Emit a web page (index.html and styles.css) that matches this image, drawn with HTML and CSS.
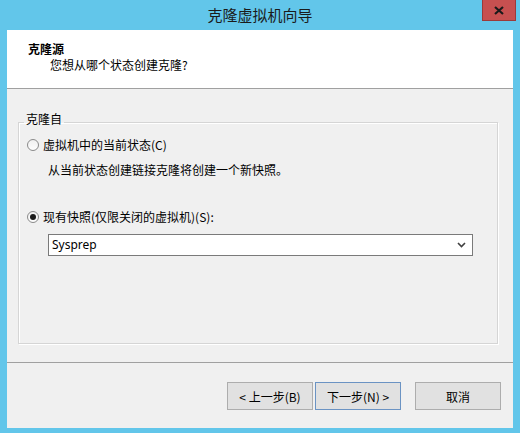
FILE: index.html
```html
<!DOCTYPE html>
<html lang="zh-CN">
<head>
    <meta charset="UTF-8">
    <title>克隆虚拟机向导</title>
    <link rel="stylesheet" href="styles.css">
</head>
<body>
    <div class="window">
        <div class="titlebar">
            <span class="title">克隆虚拟机向导</span>
            <div class="close">
                <svg width="10" height="9" viewBox="0 0 10 9"><path d="M1 1 L9 8 M9 1 L1 8" stroke="#1a1a1a" stroke-width="2.2"/></svg>
            </div>
        </div>
        <div class="client">
            <div class="header">
                <div class="h-title">克隆源</div>
                <div class="h-sub">您想从哪个状态创建克隆?</div>
            </div>
            <div class="main">
                <fieldset class="group">
                    <legend>克隆自</legend>
                    <div class="radio first"><span class="dot"></span>虚拟机中的当前状态(C)</div>
                    <div class="desc">从当前状态创建链接克隆将创建一个新快照。</div>
                    <div class="radio second"><span class="dot checked"></span>现有快照(仅限关闭的虚拟机)(S):</div>
                    <div class="combo">
                        <span>Sysprep</span>
                        <svg width="9" height="6" viewBox="0 0 9 6"><path d="M1 1 L4.5 4.5 L8 1" fill="none" stroke="#404040" stroke-width="1.6"/></svg>
                    </div>
                </fieldset>
            </div>
            <div class="footer">
                <button class="btn">&lt; 上一步(B)</button>
                <button class="btn default">下一步(N) &gt;</button>
                <button class="btn cancel">取消</button>
            </div>
        </div>
    </div>
</body>
</html>
```

FILE: styles.css
```css
* {
    margin: 0;
    padding: 0;
    box-sizing: border-box;
}
body {
    background: #62c6ea;
    font-family: "Noto Sans CJK SC", "Noto Sans", sans-serif;
    font-size: 12px;
    color: #000;
}
.window {
    width: 520px;
    height: 433px;
    background: #62c6ea;
    position: relative;
}
.titlebar {
    height: 30px;
    display: flex;
    align-items: center;
    justify-content: center;
}
.title {
    font-size: 15px;
    line-height: 20px;
    color: #1b1b1b;
    margin-top: -1px;
}
.close {
    position: absolute;
    left: 482px;
    top: 0;
    width: 34px;
    height: 21px;
    background: #c75050;
    border: 1px solid #9c3a3a;
    border-top: none;
    display: flex;
    align-items: center;
    justify-content: center;
}
.client {
    margin-left: 7px;
    width: 506px;
    height: 398px;
    background: #f0f0f0;
    display: flex;
    flex-direction: column;
}
.header {
    height: 59px;
    background: #fff;
    border-bottom: 1px solid #a0a0a0;
    padding: 11px 0 0 21px;
}
.h-title {
    font-weight: bold;
    line-height: 16px;
}
.h-sub {
    line-height: 16px;
    padding-left: 22px;
}
.main {
    height: 274px;
    display: flex;
    flex-direction: column;
    padding: 23px 15px 18px 11px;
    border-bottom: 1px solid #a0a0a0;
}
.group {
    flex: 1;
    border: 1px solid #d5d5d5;
    box-shadow: 1px 1px 0 #fff, inset 1px 1px 0 #fff;
    padding: 0;
    min-width: 0;
}
.group legend {
    margin-left: 5px;
    padding: 0 2px 6px 2px;
    line-height: 14px;
}
.radio {
    display: flex;
    align-items: center;
    line-height: 16px;
    padding-left: 8px;
}
.radio.first {
    margin-top: 5px;
}
.radio.second {
    margin-top: 31px;
}
.dot {
    width: 12px;
    height: 12px;
    border-radius: 50%;
    border: 1px solid #8a8a8a;
    background: linear-gradient(#f0f0f0, #fdfdfd);
    margin-right: 4px;
    display: flex;
    align-items: center;
    justify-content: center;
}
.dot.checked::after {
    content: "";
    width: 6px;
    height: 6px;
    border-radius: 50%;
    background: #1a1a1a;
}
.desc {
    line-height: 16px;
    margin-top: 9px;
    padding-left: 29px;
}
.combo {
    margin: 9px 24px 0 29px;
    height: 22px;
    background: #fff;
    border: 1px solid #7a7a7a;
    display: flex;
    align-items: center;
    justify-content: space-between;
    padding: 0 6px 0 3px;
    font-family: "Noto Sans", sans-serif;
    line-height: 16px;
}
.footer {
    flex: 1;
    display: flex;
    justify-content: flex-end;
    align-items: flex-start;
    padding: 19px 12px 0 0;
}
.btn {
    width: 86px;
    height: 28px;
    background: #e1e1e1;
    border: 1px solid #adadad;
    font-family: "Noto Sans CJK SC", "Noto Sans", sans-serif;
    font-size: 12px;
    color: #000;
}
.btn.default {
    margin-left: 2px;
    border-color: #6b93c3;
}
.btn.cancel {
    margin-left: 14px;
}
```
